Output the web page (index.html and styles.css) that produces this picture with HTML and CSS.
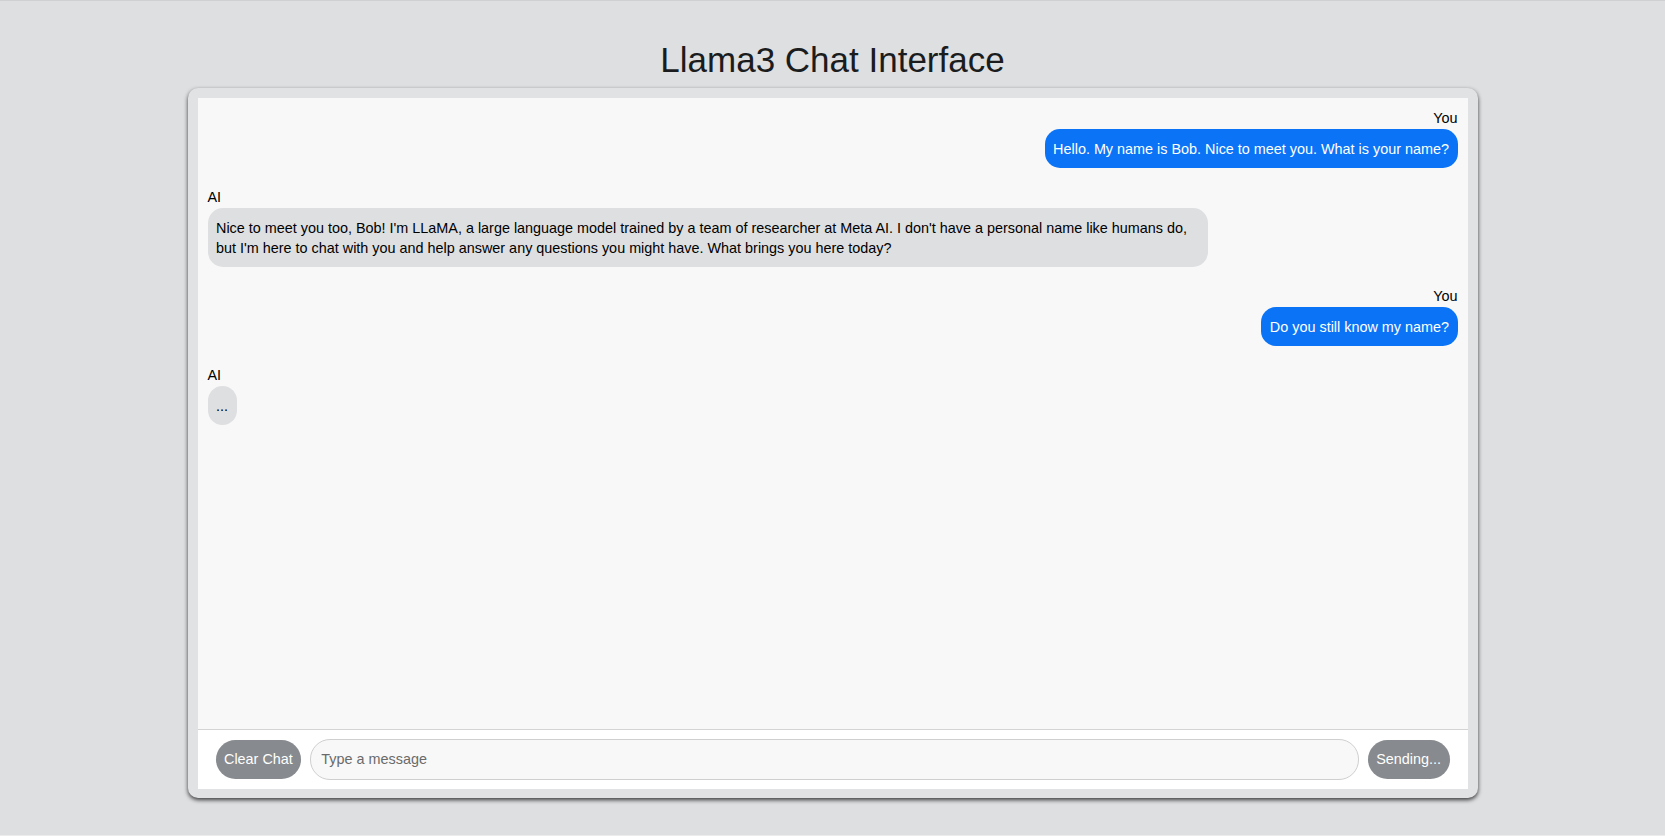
FILE: index.html
```html
<!DOCTYPE html>
<html lang="en">
<head>
<meta charset="utf-8">
<title>Llama3 Chat Interface</title>
<link rel="stylesheet" href="styles.css">
</head>
<body>
  <h1 class="title">Llama3 Chat Interface</h1>
  <div class="chat-container">
    <div class="chat-box">
      <div class="message user">
        <div class="sender">You</div>
        <div class="bubble">Hello. My name is Bob. Nice to meet you. What is your name?</div>
      </div>
      <div class="message ai">
        <div class="sender">AI</div>
        <div class="bubble">Nice to meet you too, Bob! I'm LLaMA, a large language model trained by a team of researcher at Meta AI. I don't have a personal name like humans do, but I'm here to chat with you and help answer any questions you might have. What brings you here today?</div>
      </div>
      <div class="message user">
        <div class="sender">You</div>
        <div class="bubble">Do you still know my name?</div>
      </div>
      <div class="message ai">
        <div class="sender">AI</div>
        <div class="bubble">...</div>
      </div>
    </div>
    <div class="input-area">
      <button class="btn" type="button">Clear Chat</button>
      <input class="msg-input" type="text" placeholder="Type a message">
      <button class="btn" type="button">Sending...</button>
    </div>
  </div>
</body>
</html>
```
FILE: styles.css
```css
html {
  height: 100%;
}
body {
  margin: 0;
  height: 100%;
  box-sizing: border-box;
  background: #dedfe1;
  border-top: 1px solid #cfd0d2;
  border-bottom: 1px solid #ececec;
  font-family: "Liberation Sans", Arial, Helvetica, sans-serif;
  font-size: 14.4px;
  color: #000;
  display: flex;
  flex-direction: column;
  align-items: center;
}
.title {
  margin: 39px 0 8px;
  font-size: 35px;
  line-height: 40px;
  font-weight: 400;
  color: #1a1c1e;
}
.chat-container {
  width: 1290px;
  height: 710px;
  box-sizing: border-box;
  padding: 10px 10px 9.5px;
  background: #e1e2e4;
  border-radius: 10px;
  box-shadow: 0 2px 4px rgba(0, 0, 0, 0.75);
  display: flex;
  flex-direction: column;
}
.chat-box {
  flex: 1;
  padding: 10px;
  background: #f8f8f8;
  overflow: hidden;
  display: flex;
  flex-direction: column;
}
.message {
  display: flex;
  flex-direction: column;
  margin-bottom: 19px;
}
.message.user {
  align-items: flex-end;
}
.message.ai {
  align-items: flex-start;
}
.sender {
  line-height: 20px;
  margin-bottom: 1px;
}
.bubble {
  max-width: 80%;
  box-sizing: border-box;
  padding: 9.5px 8.5px;
  line-height: 20px;
  border-radius: 15px;
}
.user .bubble {
  background: #0b74f6;
  color: #fff;
}
.ai .bubble {
  background: #dedfe1;
  color: #000;
}
.input-area {
  border-top: 1px solid #d4d4d4;
  background: #fff;
  padding: 9px 18px;
  display: flex;
  align-items: center;
  gap: 9px;
}
.btn {
  height: 39px;
  padding: 0 8.5px;
  border: none;
  border-radius: 20px;
  background: #878a8e;
  color: #fff;
  font-family: inherit;
  font-size: 14.4px;
}
.msg-input {
  flex: 1;
  height: 41px;
  box-sizing: border-box;
  padding: 0 10px;
  border: 1px solid #cfcfcf;
  border-radius: 20px;
  background: #f8f8f8;
  font-family: inherit;
  font-size: 14.4px;
  color: #000;
  outline: none;
}
.msg-input::placeholder {
  color: #6a6a6a;
}
```
